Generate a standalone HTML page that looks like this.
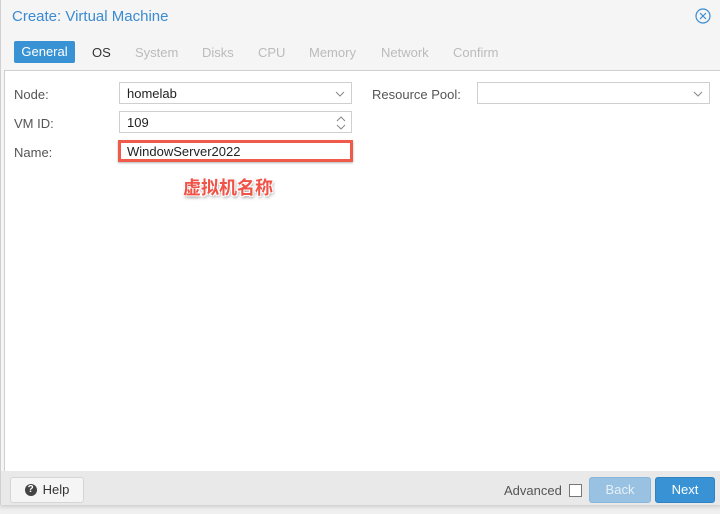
<!DOCTYPE html>
<html><head><style>
body{margin:0;width:720px;height:514px;background:#f0f0f0;font-family:"Liberation Sans",sans-serif;position:relative;overflow:hidden}
.win{position:absolute;left:0;top:0;width:720px;height:505px;background:#f5f5f5;border-left:1px solid #d0d0d0;box-shadow:0 2px 4px rgba(0,0,0,.15)}
.title{position:absolute;left:11px;top:8px;font-size:15px;color:#3a8bd1}
.close{position:absolute;left:694px;top:8px}
.tab{position:absolute;top:45px;font-size:13px;color:#bbb}
.gen{position:absolute;left:13px;top:41px;width:61px;height:22px;background:#3892d4;border-radius:2px;color:#fff;font-size:13px;line-height:22px;text-align:center}
.bodyp{position:absolute;left:3px;top:70px;width:716px;height:400px;background:#fff;border:1px solid #cfcfcf}
.lbl{position:absolute;font-size:13px;color:#555}
.fld{position:absolute;height:22px;border:1px solid #cfcfcf;background:#fff;font-size:13px;color:#222;line-height:22px;padding-left:7px;box-sizing:border-box}
.foot{position:absolute;left:0;top:471px;width:720px;height:34px;background:#e9e9e9}
.btn{position:absolute;height:24px;border-radius:3px;font-size:13px;line-height:24px;text-align:center}
.ann{position:absolute;left:182px;top:174px;font-family:"Noto Sans CJK SC",sans-serif;font-weight:bold;font-size:18px;color:#f05247;text-shadow:0 0 1px #fff,1px 1px 0 #fff,-1px -1px 0 #fff,1px -1px 0 #fff,-1px 1px 0 #fff,1px 2px 3px rgba(0,0,0,.5)}
</style></head><body>
<div class="win">
<div class="title">Create: Virtual Machine</div>
<svg class="close" width="16" height="16" viewBox="0 0 16 16"><circle cx="8" cy="8" r="7" fill="none" stroke="#3a8bd1" stroke-width="1.2"/><path d="M5 5L11 11M11 5L5 11" stroke="#3a8bd1" stroke-width="1.2"/></svg>
<div class="gen">General</div>
<div class="tab" style="left:91px;color:#333">OS</div>
<div class="tab" style="left:134px">System</div>
<div class="tab" style="left:201px">Disks</div>
<div class="tab" style="left:257px">CPU</div>
<div class="tab" style="left:308px">Memory</div>
<div class="tab" style="left:380px">Network</div>
<div class="tab" style="left:452px">Confirm</div>
<div class="bodyp"></div>
<div class="lbl" style="left:13px;top:87px">Node:</div>
<div class="lbl" style="left:13px;top:116px">VM ID:</div>
<div class="lbl" style="left:13px;top:145px">Name:</div>
<div class="lbl" style="left:371px;top:87px">Resource Pool:</div>
<div class="fld" style="left:118px;top:82px;width:233px">homelab<svg style="position:absolute;right:6px;top:8px" width="10" height="6"><path d="M1 1L5 5L9 1" fill="none" stroke="#888"/></svg></div>
<div class="fld" style="left:118px;top:111px;width:233px">109<svg style="position:absolute;right:5px;top:3px" width="10" height="16"><path d="M1 6L5 2L9 6M1 10L5 14L9 10" fill="none" stroke="#888"/></svg></div>
<div class="fld" style="left:476px;top:82px;width:233px"><svg style="position:absolute;right:6px;top:8px" width="10" height="6"><path d="M1 1L5 5L9 1" fill="none" stroke="#888"/></svg></div>
<div class="fld" style="left:117px;top:140px;width:235px;border:3px solid #f05a4a;line-height:17px;padding-left:6px;box-shadow:0 1px 2px rgba(0,0,0,.3)">WindowServer2022</div>
<div class="ann">虚拟机名称</div>
<div class="foot">
<div class="btn" style="left:9px;top:6px;width:72px;background:#f5f5f5;border:1px solid #d5d5d5;color:#333"><span style="display:inline-block;width:12px;height:12px;border-radius:6px;background:#444;color:#fff;font-size:10px;line-height:12px;font-weight:bold;vertical-align:middle;margin-right:6px;position:relative;top:-1px">?</span>Help</div>
<div class="lbl" style="left:503px;top:12px">Advanced</div>
<div style="position:absolute;left:568px;top:13px;width:11px;height:11px;border:1px solid #777;background:#fff"></div>
<div class="btn" style="left:588px;top:6px;width:60px;background:#99c2e2;color:#e6f0f8;border:1px solid #8ab8dc">Back</div>
<div class="btn" style="left:654px;top:6px;width:58px;background:#3892d4;color:#fff;border:1px solid #2f82c4">Next</div>
</div>
</div>
</body></html>
